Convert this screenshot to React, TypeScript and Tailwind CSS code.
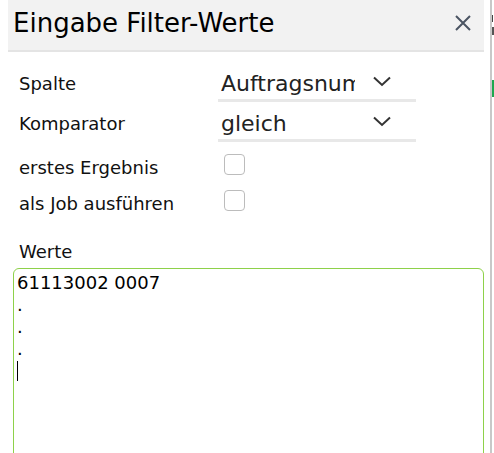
import { useState } from "react";

const font = { fontFamily: '"DejaVu Sans", Verdana, sans-serif' };

function Chevron() {
  return (
    <svg width="20" height="11" viewBox="0 0 20 11" className="shrink-0">
      <polyline points="2,1.5 10,9 18,1.5" fill="none" stroke="#333" strokeWidth="2" />
    </svg>
  );
}

function SelectRow({ label, value }: { label: string; value: string }) {
  return (
    <div className="flex h-[40px]">
      <div className="w-[199px] flex items-center pt-[3px] text-[18px] text-[#111]">{label}</div>
      <div className="w-[198px] h-[40px] flex items-center border-b-[3px] border-[#e8e8e8] pl-[3px] pr-[24px]">
        <span className="w-[134px] pt-[6px] overflow-hidden whitespace-nowrap text-[22px] leading-[26px] text-[#222]">
          {value}
        </span>
        <span className="ml-auto pt-[2px]">
          <Chevron />
        </span>
      </div>
    </div>
  );
}

function CheckRow({ label, checked, onToggle }: { label: string; checked: boolean; onToggle: () => void }) {
  return (
    <div className="flex h-[36px] items-center">
      <div className="w-[205px] pt-[7px] text-[18px] text-[#111]">{label}</div>
      <button
        onClick={onToggle}
        className="w-[21px] h-[21px] rounded-[4px] border-[1.5px] border-[#bcbcbc] bg-white"
      />
      {checked && <span className="ml-1 text-sm">✓</span>}
    </div>
  );
}

export default function App() {
  const [first, setFirst] = useState(false);
  const [job, setJob] = useState(false);
  const lines = ["61113002 0007", ".", ".", "."];

  return (
    <div className="flex h-[453px] overflow-hidden bg-white" style={font}>
      {/* Dialog */}
      <div className="ml-2 w-[476px] shrink-0">
        <div className="h-[52px] bg-[#f2f2f2] border-b-2 border-[#e4e4e4] flex items-center pl-[5px] pr-[12px] pb-[4px]">
          <h1 className="text-[26px] text-black">Eingabe Filter-Werte</h1>
          <button className="ml-auto">
            <svg width="18" height="18" viewBox="0 0 18 18">
              <path d="M2 2 L16 16 M16 2 L2 16" stroke="#4b5563" strokeWidth="2" fill="none" />
            </svg>
          </button>
        </div>

        <div className="pl-[11px] pt-[10px]">
          <SelectRow label="Spalte" value="Auftragsnummer" />
          <SelectRow label="Komparator" value="gleich" />
          <div className="mt-[4px]">
            <CheckRow label="erstes Ergebnis" checked={first} onToggle={() => setFirst(!first)} />
            <CheckRow label="als Job ausführen" checked={job} onToggle={() => setJob(!job)} />
          </div>
          <div className="mt-[20px] text-[18px] text-[#111]">Werte</div>
        </div>

        <div className="ml-[5px] mt-[3px] h-[220px] rounded-[6px] border border-[#8ed14a] px-[3px] pt-[3px] text-[18px] leading-[22px] text-black">
          {lines.map((l, i) => (
            <div key={i} className="h-[22px]">{l}</div>
          ))}
          <div className="h-[22px] flex items-center">
            <span className="w-px h-[20px] bg-black" />
          </div>
        </div>
      </div>

      {/* Background page peeking out on the right */}
      <div className="w-[6px] shrink-0" />
      <div className="w-[2px] shrink-0 bg-[#c8c8c8]" />
      <div className="w-[2px] shrink-0 overflow-hidden flex flex-col">
        <div className="h-[15px]" />
        <div className="h-[7px] w-[1px] bg-[#444]" />
        <div className="h-[5px]" />
        <div className="h-[8px] w-[2px] bg-[#555]" />
        <div className="h-[45px]" />
        <div className="h-[17px] w-[2px] bg-[#1ea84f]" />
      </div>
    </div>
  );
}
